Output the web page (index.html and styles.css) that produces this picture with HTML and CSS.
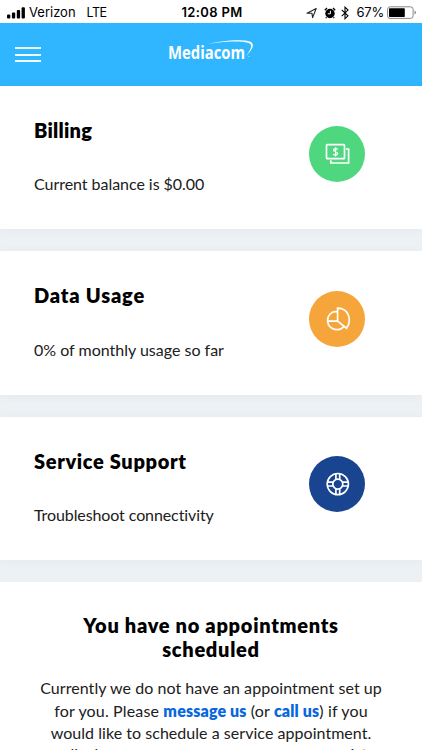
FILE: index.html
```html
<!DOCTYPE html>
<html lang="en">
<head>
<meta charset="utf-8">
<title>Mediacom</title>
<link rel="stylesheet" href="styles.css">
</head>
<body>
<div class="status">
  <div class="carrier">
    <svg width="19" height="12" viewBox="0 0 19 12"><rect x="0" y="7.5" width="3.3" height="4" rx="1"/><rect x="4.9" y="5.5" width="3.3" height="6" rx="1"/><rect x="9.8" y="3" width="3.3" height="8.5" rx="1"/><rect x="14.6" y="0.3" width="3.3" height="11.2" rx="1"/></svg>
    <span class="verizon">Verizon</span><span class="lte">LTE</span>
  </div>
  <div class="clock">12:08 PM</div>
  <div class="indicators">
    <svg class="nav" width="12" height="12" viewBox="0 0 12 12"><path d="M1 6.3 10.2 1.5 6.6 10.6 6 6.3Z" fill="none" stroke="#222" stroke-width="1.1" stroke-linejoin="round"/></svg>
    <svg class="alarm" width="12" height="12" viewBox="0 0 12 12"><circle cx="6" cy="6.5" r="4.7"/><path d="M.8 3.2 3 1M11.2 3.2 9 1M2.5 10.3 1.8 11.1M9.5 10.3l.7.8" stroke="#000" stroke-width="1.3"/><path d="M6.4 3.8v3H3.8" fill="none" stroke="#fff" stroke-width="1"/></svg>
    <svg class="bt" width="8" height="14" viewBox="0 0 8 14"><path d="M.7 3.8 7 9.8 4 12.7V1.2L7 4.1.7 10.1" fill="none" stroke="#000" stroke-width="1.1"/></svg>
    <span class="percent">67%</span>
    <svg class="battery" width="30" height="14" viewBox="0 0 30 14"><rect x=".6" y=".8" width="25.5" height="11.6" rx="2.5" fill="#fff" stroke="#888"/><rect x="2" y="2.2" width="15.8" height="8.8" rx=".8"/><path d="M27.5 4.6Q29 5.2 29 6.6T27.5 8.6Z" fill="#888"/></svg>
  </div>
</div>
<header class="bar">
  <div class="burger"><i></i><i></i><i></i></div>
  <div class="logo"><span>Mediacom</span>
    <svg width="62" height="22" viewBox="0 0 62 22"><path d="M10 5.4C25 .9 54 .2 58 4c3 3-1.3 8.6-5 13.6 5.3-5 10.2-11.3 6.8-14.8C55-1.7 27 .2 10 5.4Z" transform="translate(0 1) scale(.95 .95)" fill="#fff"/><circle cx="54" cy="17.5" r=".6" fill="#bfe6ff"/></svg>
  </div>
</header>
<main>
  <section class="card">
    <div><h2 class="h-billing">Billing</h2><p class="p-billing">Current balance is $0.00</p></div>
    <div class="icon green"><svg width="26" height="24" viewBox="0 0 26 24"><rect x="1.9" y="2.7" width="18" height="14" rx=".7"/><path d="M21.4 7H24v14H6.2v-2.7"/><path class="dollar" d="M13.1 7.6C12.5 6.2 9 6.2 8.9 8c0 2.2 4.2 1.3 4.2 3.6 0 2-3.7 2-4.4.3M11 5.2v9.2"/></svg></div>
  </section>
  <section class="card">
    <div><h2 class="h-data">Data Usage</h2><p class="p-data">0% of monthly usage so far</p></div>
    <div class="icon orange"><svg width="26" height="24" viewBox="0 0 26 24"><path d="M13 14.1V1.1C25.3 1.4 27 14.3 21.9 21.2ZM13 4.9C6.2 3.2 2.5 9.6 3 14.2 4 23.5 15.5 25.1 19.4 19M3 14.1h10"/></svg></div>
  </section>
  <section class="card">
    <div><h2 class="h-service">Service Support</h2><p class="p-service">Troubleshoot connectivity</p></div>
    <div class="icon blue"><svg width="26" height="24" viewBox="0 0 26 24"><circle cx="13.2" cy="12.1" r="10.6"/><circle cx="13.2" cy="12.1" r="5"/><path d="M11.3 1.7v5.8M15.1 1.7v5.8M11.3 16.7v5.8M15.1 16.7v5.8M2.8 10.2h5.8M2.8 14h5.8M17.8 10.2h5.8M17.8 14h5.8"/></svg></div>
  </section>
  <section class="appointments">
    <h2><span class="a1">You have no appointments</span><span class="a2">scheduled</span></h2>
    <p><span class="l1">Currently we do not have an appointment set up</span><span class="l2">for you. Please <a>message us</a> (or <a>call us</a>) if you</span><span class="l3">would like to schedule a service appointment.</span><span class="l4">call when we can come over so we can assist</span></p>
  </section>
</main>
</body>
</html>
```
FILE: styles.css
```css
* { box-sizing: border-box; }
html, body { height: 100%; overflow: hidden; }
body { margin: 0; background: #ecf1f4; color: #000; font-family: Lato, sans-serif; font-variant-ligatures: none; }
h2, p { margin: 0; }
svg { display: block; flex: none; }
.status { height: 23px; background: #fff; display: grid; grid-template-columns: 1fr auto 1fr; align-items: center; font: 13px/23px Inter, sans-serif; padding: 1px 5px 0 7px; }
.carrier, .indicators { display: flex; align-items: center; white-space: nowrap; }
.verizon { margin-left: 3px; }
.lte { margin-left: 11px; font-size: 12.5px; letter-spacing: -.5px; }
.clock { font-weight: 600; letter-spacing: .35px; }
.indicators { justify-content: flex-end; }
.alarm { margin-left: 6px; }
.bt { margin-left: 5px; }
.percent { margin-left: 7px; letter-spacing: -.2px; }
.battery { margin-left: 3px; }
.bar { height: 63px; background: #30b5ff; display: grid; grid-template-columns: 168px auto; align-items: start; }
.burger { margin: 24px 0 0 15px; width: 26px; display: grid; gap: 4.5px; }
.burger i { height: 2px; background: #effaff; }
.logo { position: relative; width: 86px; height: 40px; padding-top: 18px; color: #fff; font: 700 18px/22px "Open Sans", sans-serif; }
.logo span { display: block; transform: scaleX(.825); transform-origin: 0 0; }
.logo svg { position: absolute; left: 27px; top: 16px; }
.card { height: 143.4px; margin-bottom: 21.9px; padding: 0 57px 0 34px; background: #fff; display: flex; justify-content: space-between; box-shadow: 0 1px 8px rgba(70, 100, 120, .06); }
.card h2 { padding-top: 31px; font: 800 20px/26px Lato, sans-serif; font-variant-ligatures: none; white-space: nowrap; }
.card p { margin-top: 28.3px; font-size: 16px; line-height: 26px; color: #202020; white-space: nowrap; }
.h-billing { letter-spacing: .25px; }
.h-data { letter-spacing: .8px; }
.h-service { letter-spacing: .65px; }
.p-billing { letter-spacing: -.04px; }
.p-service { letter-spacing: -.1px; }
.icon { width: 56px; height: 56px; margin-top: 39.8px; border-radius: 50%; display: grid; place-items: center; }
.icon svg { fill: none; stroke: #fff; stroke-width: 1.7; transform: translateX(.6px); }
.icon .dollar { stroke-width: 1.3; }
.green { background: #4ed77f; }
.orange { background: #f6a53a; }
.blue { background: #194490; }
.appointments { background: #fff; height: 200px; padding-top: 32.4px; text-align: center; white-space: nowrap; }
.appointments span { display: block; }
.appointments h2 { font: 800 20px/23.5px Lato, sans-serif; letter-spacing: .7px; }
.appointments p { margin-top: 16px; font-size: 16px; line-height: 22.5px; color: #202020; }
.appointments a { color: #0867dd; font-weight: 800; }
.l1 { letter-spacing: .06px; }
.l2 { letter-spacing: .15px; }
.l3 { letter-spacing: .04px; }
.l4 { margin-top: -2px; }
```
